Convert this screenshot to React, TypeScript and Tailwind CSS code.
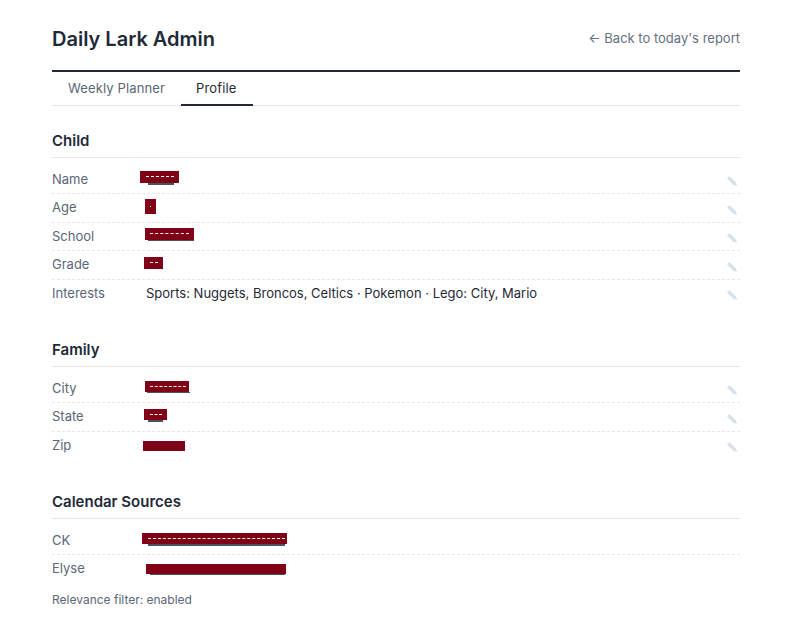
type Row = {
  label: string;
  value?: string;
  bar?: string;
  // what shows through the masked value: white specks in the block, dark text below it
  speck?: string;
  under?: string;
  edit?: boolean;
};

const EditIcon = () => (
  <svg width="10" height="10" viewBox="0 0 10 10" className="absolute top-[10.5px] right-[3.5px]">
    <path d="M2.5 0 L0 2.5 L6.5 9 L10 10 L9 6.5 Z" fill="#d8e0e9" />
  </svg>
);

const Section = ({ title, rows }: { title: string; rows: Row[] }) => (
  <section className="mb-[31.5px] last-of-type:mb-0">
    <h3 className="border-b border-[#e5e7eb] pb-[5px] text-[15px] leading-[22.5px] font-semibold text-[#1f2937]">{title}</h3>
    <div className="mt-[7.5px]">
      {rows.map((row) => (
        <div
          key={row.label}
          className="relative flex border-b border-dashed border-[#e5e7eb] py-1 text-[13px] leading-[19.5px] last:border-b-0"
        >
          <span className="w-[94px] shrink-0 text-[#5b6677]">{row.label}</span>
          <span className="flex-1 text-[#1f2937]">{row.value ?? "\u00a0"}</span>
          {row.under && <span className={`absolute bg-[#4a5260] ${row.under}`} />}
          {row.bar && (
            <span className={`absolute bg-[#800018] ${row.bar}`}>
              {row.speck && <span className={`absolute border-t border-dashed border-white ${row.speck}`} />}
            </span>
          )}
          {row.edit !== false && <EditIcon />}
        </div>
      ))}
    </div>
  </section>
);

export default function App() {
  return (
    <div className="min-h-[643px] bg-white font-['Inter',sans-serif] text-[#1f2937]">
      <div className="ml-[52px] w-[688px] pt-6">
        <header className="flex items-center justify-between border-b-2 border-[#1f2937] pb-4">
          <h1 className="text-[20px] leading-[30px] font-semibold">Daily Lark Admin</h1>
          <a className="text-[13px] leading-[19.5px] text-[#64707f]">← Back to today's report</a>
        </header>
        <nav className="mb-6 flex border-b border-[#e5e7eb] text-[13px] leading-[19.5px] tracking-[0.01em]">
          <span className="px-4 pt-[7px] pb-[5px] text-[#5b6677]">Weekly Planner</span>
          <span className="-mb-px border-b-2 border-[#1f2937] pt-[7px] pr-[17px] pb-[5px] pl-[15px]">Profile</span>
        </nav>
        <Section
          title="Child"
          rows={[
            {
              label: "Name",
              bar: "left-[88px] top-[5.5px] h-[12px] w-[39px]",
              speck: "left-[6px] top-[5px] w-[28px]",
              under: "left-[96px] top-[17.5px] h-[2px] w-[26px]",
            },
            { label: "Age", bar: "left-[93px] top-[5px] h-[15px] w-[11px]", speck: "left-[5px] top-[7px] w-[1px]" },
            {
              label: "School",
              bar: "left-[93px] top-[5.5px] h-[12px] w-[49px]",
              speck: "left-[5px] top-[5px] w-[39px]",
              under: "left-[96px] top-[17.5px] h-[1px] w-[46px]",
            },
            { label: "Grade", bar: "left-[92px] top-[6px] h-[12px] w-[19px]", speck: "left-[6px] top-[5px] w-[8px]" },
            { label: "Interests", value: "Sports: Nuggets, Broncos, Celtics · Pokemon · Lego: City, Mario" },
          ]}
        />
        <Section
          title="Family"
          rows={[
            {
              label: "City",
              bar: "left-[93px] top-[6.5px] h-[11px] w-[44px]",
              speck: "left-[5px] top-[5px] w-[36px]",
              under: "left-[95px] top-[17.5px] h-[1px] w-[43px]",
            },
            {
              label: "State",
              bar: "left-[92px] top-[6px] h-[11px] w-[23px]",
              speck: "left-[6px] top-[5px] w-[12px]",
              under: "left-[96px] top-[17px] h-[2px] w-[15px]",
            },
            { label: "Zip", bar: "left-[91px] top-[9px] h-[10px] w-[42px]" },
          ]}
        />
        <Section
          title="Calendar Sources"
          rows={[
            {
              label: "CK",
              bar: "left-[90px] top-[6.5px] h-[11px] w-[145px]",
              speck: "left-[6px] top-[5px] w-[137px]",
              under: "left-[96px] top-[17.5px] h-[2px] w-[137px]",
              edit: false,
            },
            {
              label: "Elyse",
              bar: "left-[94px] top-[9px] h-[10px] w-[140px]",
              under: "left-[98px] top-[19px] h-[1px] w-[135px]",
              edit: false,
            },
          ]}
        />
        <p className="mt-[8.5px] text-[12px] leading-[18px] text-[#5b6677]">Relevance filter: enabled</p>
      </div>
    </div>
  );
}
